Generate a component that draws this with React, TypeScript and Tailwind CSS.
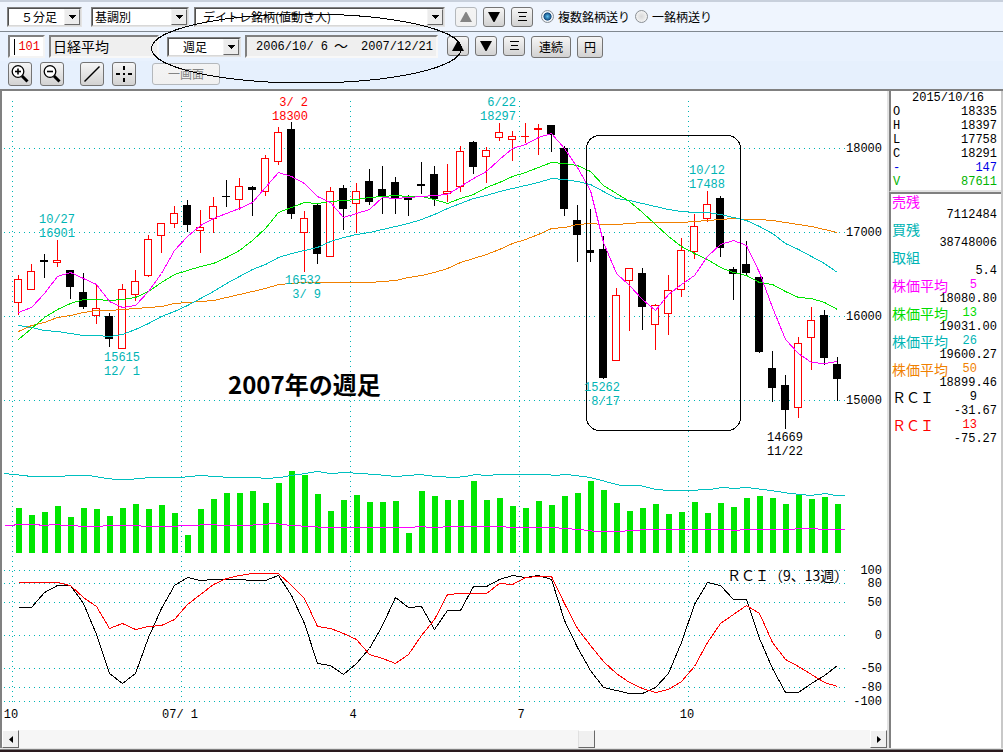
import React, { useState } from 'react';
import clsx from 'clsx';

interface Candle {
  high: number;
  top: number;
  bottom: number;
  low: number;
  up: boolean;
}

type Row = [number, number, number, number, number];

// high, body top, body bottom, low, 1 = up week
const candleRows: Row[] = [
  [275, 279, 303, 315, 1], [264, 271, 290, 290, 1], [254, 260, 262, 278, 0], [240, 260, 263, 267, 1],
  [270, 270, 287, 299, 0], [273, 292, 307, 309, 0], [285, 308, 316, 324, 1], [313, 316, 339, 347, 0],
  [284, 289, 349, 349, 1], [270, 281, 295, 301, 1], [235, 239, 276, 277, 1], [223, 223, 236, 253, 1],
  [206, 213, 224, 228, 1], [200, 205, 225, 232, 0], [210, 227, 231, 253, 1], [197, 206, 219, 233, 1],
  [180, 196, 197, 207, 0], [178, 186, 200, 210, 1], [186, 187, 190, 216, 0], [155, 158, 192, 196, 1],
  [127, 132, 162, 165, 1], [122, 129, 214, 219, 0], [211, 218, 233, 272, 1], [204, 205, 254, 264, 0],
  [187, 191, 257, 257, 1], [185, 188, 209, 230, 0], [183, 191, 204, 233, 1], [169, 181, 202, 205, 0],
  [166, 189, 196, 214, 0], [177, 182, 199, 214, 0], [195, 197, 200, 216, 0], [162, 184, 186, 194, 0],
  [166, 174, 199, 206, 0], [164, 191, 194, 202, 1], [146, 151, 187, 192, 1], [141, 142, 167, 174, 0],
  [147, 150, 157, 183, 1], [123, 132, 138, 141, 1], [131, 136, 140, 161, 1], [123, 136, 137, 143, 1],
  [124, 128, 130, 155, 1], [125, 125, 135, 152, 0], [146, 148, 209, 216, 0], [205, 220, 235, 262, 0],
  [209, 250, 253, 262, 0], [236, 249, 378, 379, 0], [288, 295, 361, 361, 1], [268, 268, 281, 331, 1],
  [268, 273, 307, 330, 0], [304, 305, 325, 350, 1], [275, 290, 314, 335, 1], [238, 250, 290, 297, 1],
  [214, 226, 252, 259, 1], [191, 204, 219, 222, 1], [196, 198, 248, 257, 0], [267, 269, 274, 300, 0],
  [241, 264, 273, 276, 0], [277, 277, 352, 353, 0], [351, 368, 388, 402, 0], [375, 385, 410, 429, 0],
  [337, 343, 408, 418, 1], [307, 320, 338, 370, 1], [310, 315, 358, 365, 0], [357, 364, 379, 401, 0],
];

const candles: Candle[] = candleRows.map(([high, top, bottom, low, up]) => ({ high, top, bottom, low, up: up === 1 }));

const ma5 = [
  312, 307, 293, 276, 272, 278, 284, 301, 307, 305, 291, 273, 250, 236, 225, 218, 213, 208, 202, 187, 172, 176,
  183, 196, 202, 217, 213, 209, 197, 198, 197, 196, 195, 194, 186, 178, 171, 159, 148, 144, 137, 133, 148, 167,
  190, 242, 273, 285, 299, 310, 294, 284, 275, 256, 244, 240, 245, 272, 307, 339, 353, 362, 363, 361,
];
const ma13 = [
  339, 328, 317, 309, 303, 299, 299, 300, 299, 297, 291, 282, 274, 270, 266, 263, 257, 250, 240, 228, 212, 207,
  202, 203, 201, 200, 199, 197, 196, 195, 196, 196, 199, 203, 198, 194, 187, 182, 176, 172, 167, 162, 163, 165,
  171, 185, 193, 201, 212, 224, 236, 246, 253, 259, 267, 272, 275, 282, 284, 291, 297, 298, 302, 309,
];
const ma26 = [
  325, 327, 330, 331, 333, 335, 335, 336, 334, 329, 323, 316, 311, 305, 298, 291, 283, 276, 269, 264, 257, 253,
  250, 247, 241, 237, 234, 232, 229, 226, 223, 219, 214, 208, 203, 198, 195, 191, 188, 185, 182, 178, 179, 181,
  184, 191, 198, 200, 203, 206, 209, 211, 212, 212, 214, 217, 220, 226, 233, 243, 249, 256, 263, 272,
];
const ma50 = [
  331, 325, 322, 317, 315, 312, 310, 310, 309, 308, 307, 306, 303, 302, 301, 300, 297, 294, 291, 288, 284, 283,
  282, 282, 282, 282, 282, 282, 281, 280, 277, 275, 272, 268, 262, 258, 254, 249, 243, 239, 234, 228, 227, 224,
  223, 224, 224, 223, 222, 222, 222, 222, 221, 220, 219, 218, 219, 219, 220, 222, 224, 226, 229, 232,
];
const volumes = [
  508, 515, 512, 506, 517, 508, 509, 516, 508, 504, 509, 505, 513, 535, 509, 499, 493, 493, 491, 503, 483, 471,
  475, 494, 511, 500, 495, 502, 502, 501, 533, 491, 496, 500, 500, 481, 500, 498, 506, 508, 501, 505, 496, 493,
  481, 490, 503, 511, 508, 504, 514, 512, 502, 513, 503, 507, 498, 496, 498, 504, 495, 499, 497, 504,
];
const rci9 = [
  607, 607, 592, 585, 585, 603, 634, 673, 683, 673, 637, 608, 585, 577, 580, 579, 579, 579, 580, 580, 575, 595,
  623, 663, 665, 674, 663, 648, 625, 597, 607, 606, 629, 610, 610, 586, 586, 579, 575, 577, 575, 579, 620, 647,
  670, 687, 690, 693, 693, 687, 673, 642, 604, 582, 585, 599, 599, 638, 668, 692, 692, 683, 675, 665,
];
const rci13 = [
  582, 582, 582, 582, 585, 597, 606, 628, 623, 629, 626, 625, 619, 604, 594, 584, 578, 575, 573, 573, 573, 585,
  598, 626, 628, 633, 639, 654, 658, 663, 654, 635, 619, 594, 593, 593, 593, 583, 584, 577, 576, 576, 603, 628,
  645, 661, 673, 682, 688, 692, 689, 681, 666, 642, 623, 614, 605, 613, 642, 659, 666, 674, 682, 686,
];

const buyLine =
  '4,473 12,474 24,475 30,476 60,476 70,475 88,475 100,477 115,479 128,479 150,477 180,477 200,475 230,477 255,477 265,478 280,477 290,475 305,473 317,471 330,473 345,472 375,474 395,476 420,474 435,476 455,477 465,476 475,474 485,475 500,474 545,474 555,475 565,474 575,475 590,477 605,481 620,485 640,485 655,489 670,490 685,490 710,489 722,487 735,488 745,487 755,488 770,490 790,493 810,495 825,493 835,495 844,495';
const sellLine =
  '4,525 12,525 16,524 36,524 42,525 55,524 64,525 90,526 116,525 165,526 190,525 210,524 222,525 245,525 275,523 290,525 310,526 325,527 410,527 420,526 430,527 455,526 500,526 510,527 555,527 562,528 580,529 595,531 620,531 630,530 650,529 725,529 735,530 745,529 790,529 800,528 815,528 820,529 844,529';

const priceLabels = [
  { x: 57, y: 223, lines: ['10/27', '16901'], color: 'fill-[#00b4b4]' },
  { x: 122, y: 361, lines: ['15615', '12/ 1'], color: 'fill-[#00b4b4]' },
  { x: 291, y: 106, lines: ['3/ 2', '18300'], color: 'fill-[#ff0000]', anchor: 'end' },
  { x: 304, y: 284, lines: ['16532', '3/ 9'], color: 'fill-[#00b4b4]', anchor: 'end' },
  { x: 499, y: 106, lines: ['6/22', '18297'], color: 'fill-[#00b4b4]', anchor: 'end' },
  { x: 603, y: 391, lines: ['15262', '8/17'], color: 'fill-[#00b4b4]', anchor: 'end' },
  { x: 707, y: 174, lines: ['10/12', '17488'], color: 'fill-[#00b4b4]' },
  { x: 785, y: 441, lines: ['14669', '11/22'], color: 'fill-black' },
];

const priceAxis = [
  { label: '18000', y: 148 },
  { label: '17000', y: 232 },
  { label: '16000', y: 316 },
  { label: '15000', y: 400 },
];

const rciAxis = [
  { label: '100', y: 570 },
  { label: '80', y: 583 },
  { label: '50', y: 602 },
  { label: '0', y: 635 },
  { label: '-50', y: 668 },
  { label: '-80', y: 687 },
  { label: '-100', y: 701 },
];

const timeAxis = [
  { label: '10', x: 12, textX: 11 },
  { label: '07/ 1', x: 181, textX: 180 },
  { label: '4', x: 350, textX: 353 },
  { label: '7', x: 519, textX: 521 },
  { label: '10', x: 688, textX: 687 },
];

const quote = [
  { label: 'O', value: '18335', color: 'text-black' },
  { label: 'H', value: '18397', color: 'text-black' },
  { label: 'L', value: '17758', color: 'text-black' },
  { label: 'C', value: '18291', color: 'text-black' },
  { label: '-', value: '147', color: 'text-[#0000e6]' },
  { label: 'V', value: '87611', color: 'text-[#00b400]' },
];

const indicators = [
  { label: '売残', period: '', value: '7112484', color: 'text-[#ff00ff]' },
  { label: '買残', period: '', value: '38748006', color: 'text-[#00b4b4]' },
  { label: '取組', period: '', value: '5.4', color: 'text-[#00b4b4]' },
  { label: '株価平均', period: '5', value: '18080.80', color: 'text-[#ff00ff]' },
  { label: '株価平均', period: '13', value: '19031.00', color: 'text-[#00dc00]' },
  { label: '株価平均', period: '26', value: '19600.27', color: 'text-[#00b4b4]' },
  { label: '株価平均', period: '50', value: '18899.46', color: 'text-[#f08000]' },
  { label: 'ＲＣＩ', period: '9', value: '-31.67', color: 'text-black' },
  { label: 'ＲＣＩ', period: '13', value: '-75.27', color: 'text-[#ff0000]' },
];

const candleX = (i: number) => 18 + i * 13;
const toPoints = (ys: number[]) => ys.map((y, i) => `${candleX(i)},${y}`).join(' ');

function Combo({ label, options, className, textClass }: { label: string; options: string[]; className: string; textClass: string }) {
  return (
    <div className={clsx('relative shrink-0 border border-[#e4e4e4] border-t-[#808080] border-l-[#808080] bg-white', className)}>
      <select
        aria-label={label}
        className={clsx('block h-[18px] w-full appearance-none border border-[#d8d8d8] border-t-[#505050] border-l-[#505050] bg-white pr-4 text-xs leading-4 text-black outline-none', textClass)}
      >
        {options.map((option) => (
          <option key={option}>{option}</option>
        ))}
      </select>
      <span className="pointer-events-none absolute top-px right-px flex h-4 w-4 items-center justify-center border border-[#696969] border-t-[#f4f4f4] border-l-[#f4f4f4] bg-[#ececec]">
        <svg width="7" height="4" viewBox="0 0 7 4" shapeRendering="crispEdges">
          <path d="M0 0h7v1H0zM1 1h5v1H1zM2 2h3v1H2zM3 3h1v1H3z" />
        </svg>
      </span>
    </div>
  );
}

function ToolButton({ label, className, disabled, children }: { label: string; className: string; disabled?: boolean; children: React.ReactNode }) {
  return (
    <button
      type="button"
      aria-label={label}
      disabled={disabled}
      className={clsx(
        'flex shrink-0 items-center justify-center rounded-[3px] border bg-gradient-to-b text-xs leading-4',
        disabled
          ? 'border-[#b4b8bc] from-[#f4f4f4] to-[#f0f0f0] text-[#848484]'
          : 'border-[#747474] from-[#f6f6f6] to-[#d2d2d2] text-black',
        className
      )}
    >
      {children}
    </button>
  );
}

function Triangle({ down }: { down?: boolean }) {
  return (
    <svg width="12" height="10" viewBox="0 0 12 10" fill="currentColor">
      {down ? <path d="M0 0h12L6.5 10h-1z" /> : <path d="M5.5 0h1L12 10H0z" />}
    </svg>
  );
}

function Bars() {
  return (
    <svg width="9" height="9" viewBox="0 0 9 9" fill="currentColor" shapeRendering="crispEdges">
      <path d="M0 0h9v1H0zM1 4h7v1H1zM0 8h9v1H0z" />
    </svg>
  );
}

function Magnifier({ plus }: { plus?: boolean }) {
  return (
    <svg width="22" height="22" viewBox="0 0 22 22" fill="none" stroke="#000">
      <circle cx="9" cy="8.5" r="5.8" strokeWidth="1.3" fill="#fff" />
      <path d="M6 8.5h6" strokeWidth="1.6" />
      {plus && <path d="M9 5.5v6" strokeWidth="1.6" />}
      <path d="M13 13l5.5 5.5" strokeWidth="3" />
    </svg>
  );
}

function SendMode() {
  const [mode, setMode] = useState('multi');
  const options = [
    { id: 'multi', label: '複数銘柄送り' },
    { id: 'single', label: '一銘柄送り' },
  ];
  return (
    <div className="ml-2 flex items-center gap-[5px]">
      {options.map((option) => (
        <label key={option.id} className="flex items-center gap-1 text-xs leading-4 whitespace-nowrap">
          <input
            type="radio"
            name="send-mode"
            checked={mode === option.id}
            onChange={() => setMode(option.id)}
            className="h-[13px] w-[13px] appearance-none rounded-full border border-[#8a8f94] bg-[radial-gradient(circle,#d8d8d8_0%,#f6f6f6_80%)] checked:bg-[radial-gradient(circle,#5cc0f0_0%,#12487c_48%,#f0f4f8_56%)]"
          />
          {option.label}
        </label>
      ))}
    </div>
  );
}

function Toolbar() {
  return (
    <header className="relative border-t-2 border-[#c8d0dc]">
      {/* Watch list row */}
      <div className="flex h-[30px] items-center border-b border-[#808890] bg-[#eff5fe] pl-[7px]">
        <Combo label="足種" options={['５分足']} className="w-[75px]" textClass="pl-3" />
        <Combo label="分類" options={['基調別']} className="ml-[9px] w-[98px]" textClass="pl-[2px]" />
        <Combo label="銘柄リスト" options={['デイトレ銘柄(値動き人)']} className="ml-[5px] w-[251px]" textClass="pl-[7px]" />
        <div className="ml-[10px] flex gap-1.5">
          <ToolButton label="前の銘柄" className="h-5 w-[22px]" disabled><Triangle /></ToolButton>
          <ToolButton label="次の銘柄" className="h-5 w-[22px]"><Triangle down /></ToolButton>
          <ToolButton label="銘柄一覧" className="h-5 w-[22px]"><Bars /></ToolButton>
        </div>
        <SendMode />
      </div>

      {/* Symbol and period row */}
      <div className="flex h-[29px] items-center bg-[#e9f2fe] pl-2">
        <div className="relative shrink-0">
          <input
            aria-label="銘柄コード"
            defaultValue="101"
            className="block h-[23px] w-[37px] border-2 border-[#f4f4f4] border-t-[#808080] border-l-[#808080] bg-white pr-[3px] text-right font-['Liberation_Mono',monospace] text-xs text-[#f00000] outline-none"
          />
          <span className="pointer-events-none absolute top-1 left-1.5 h-4 w-px bg-black" />
        </div>
        <input
          aria-label="銘柄名"
          readOnly
          value="日経平均"
          className="ml-1 h-[23px] w-[110px] shrink-0 border-2 border-[#f8f8f8] border-t-[#808080] border-l-[#808080] bg-[#efefef] pb-0.5 pl-[2px] text-sm text-black outline-none"
        />
        <Combo label="期間" options={['週足']} className="ml-2 w-[74px]" textClass="pl-[14px]" />
        <output className="ml-1 flex h-[23px] w-[193px] shrink-0 items-center border-2 border-[#f8f8f8] border-t-[#808080] border-l-[#808080] bg-[#efefef] pl-[9px] font-['Liberation_Mono','Noto_Sans_CJK_JP',monospace] text-xs leading-4 whitespace-pre">
          <span className="w-[78px]">2006/10/ 6</span>
          <span className="w-[27px] text-sm">～</span>
          <span>2007/12/21</span>
        </output>
        <div className="ml-[9px] flex gap-1.5">
          <ToolButton label="前へ" className="h-5 w-[22px]"><Triangle /></ToolButton>
          <ToolButton label="次へ" className="h-5 w-[22px]"><Triangle down /></ToolButton>
          <ToolButton label="一覧" className="h-5 w-[22px]"><Bars /></ToolButton>
          <ToolButton label="連続" className="h-[22px] w-10">連続</ToolButton>
          <ToolButton label="円" className="h-[22px] w-[26px]">円</ToolButton>
        </div>
      </div>

      {/* Drawing tools row */}
      <div className="flex h-7 items-center bg-[#e6f0fd] pb-0.5 pl-2">
        <ToolButton label="拡大" className="h-6 w-6"><Magnifier plus /></ToolButton>
        <ToolButton label="縮小" className="ml-2 h-6 w-6"><Magnifier /></ToolButton>
        <ToolButton label="ライン" className="ml-4 h-6 w-6">
          <svg width="22" height="22" viewBox="0 0 22 22"><path d="M3.5 18.5l15-15" stroke="#000" strokeWidth="1.4" /></svg>
        </ToolButton>
        <ToolButton label="十字線" className="ml-2 h-6 w-6">
          <svg width="22" height="22" viewBox="0 0 22 22" shapeRendering="crispEdges">
            <path d="M3 10h4v2H3zM10 10h2v2h-2zM15 10h4v2h-4zM10 3h2v4h-2zM10 15h2v4h-2z" />
          </svg>
        </ToolButton>
        <ToolButton label="一画面" className="ml-4 h-[22px] w-[68px]" disabled>一画面</ToolButton>
      </div>

      {/* Hand drawn circle over the period */}
      <svg className="pointer-events-none absolute -top-0.5 left-0" width="470" height="90" fill="none" shapeRendering="crispEdges">
        <ellipse cx="306.5" cy="48.5" rx="155" ry="34.5" stroke="#000" />
      </svg>
    </header>
  );
}

function Chart() {
  return (
    <svg viewBox="2 91 885 639" className="block h-auto w-full bg-white" role="img" aria-label="日経平均 週足">
      {/* Dotted grid */}
      <g className="stroke-[#00b4b4]" strokeDasharray="1 4" shapeRendering="crispEdges">
        {[...priceAxis, ...rciAxis].map((tick) => (
          <path key={tick.label} d={`M4 ${tick.y + 0.5}H845`} />
        ))}
        {timeAxis.map((tick) => (
          <path key={tick.x} d={`M${tick.x + 0.5} 101V702`} />
        ))}
      </g>

      {/* Volume */}
      <g shapeRendering="crispEdges">
        {volumes.map((y, i) => (
          <rect key={i} x={candleX(i) - 2} y={y} width="6" height={553 - y} className="fill-[#00e600]" />
        ))}
      </g>

      {/* Candles */}
      <g shapeRendering="crispEdges">
        {candles.map((c, i) => {
          const x = candleX(i);
          const height = c.bottom - c.top;
          return (
            <g key={i}>
              <rect x={x} y={c.high} width="1" height={c.low - c.high} className={c.up ? 'fill-[#ff0000]' : 'fill-black'} />
              <rect x={x - 4} y={c.top} width="8" height={height} className={c.up ? 'fill-[#ff0000]' : 'fill-black'} />
              {c.up && height > 2 && <rect x={x - 3} y={c.top + 1} width="6" height={height - 2} className="fill-white" />}
            </g>
          );
        })}
      </g>

      {/* Moving averages, margin balances and RCI */}
      <g fill="none" transform="translate(0.5 0.5)" shapeRendering="crispEdges">
        <polyline points={toPoints(ma50)} className="stroke-[#f08000]" />
        <polyline points={toPoints(ma26)} className="stroke-[#00c0c0]" />
        <polyline points={toPoints(ma13)} className="stroke-[#00e600]" />
        <polyline points={toPoints(ma5)} className="stroke-[#ff00ff]" />
        <polyline points={buyLine} className="stroke-[#00c0c0]" />
        <polyline points={sellLine} className="stroke-[#ff00ff]" />
        <polyline points={toPoints(rci9)} className="stroke-black" />
        <polyline points={toPoints(rci13)} className="stroke-[#ff0000]" />
        <rect x="586" y="135" width="154" height="295" rx="13" className="stroke-black" />
      </g>

      {/* Labels */}
      <g className="font-['Liberation_Mono',monospace] text-xs whitespace-pre">
        {priceLabels.map((item) => (
          <g key={item.x} className={item.color} textAnchor={item.anchor === 'end' ? 'end' : 'middle'}>
            <text x={item.anchor === 'end' ? item.x + 17 : item.x} y={item.y}>{item.lines[0]}</text>
            <text x={item.anchor === 'end' ? item.x + 17 : item.x} y={item.y + 14}>{item.lines[1]}</text>
          </g>
        ))}
        {[...priceAxis, ...rciAxis].map((tick) => (
          <text key={tick.label} x="882" y={tick.y + 4} textAnchor="end">{tick.label}</text>
        ))}
        {timeAxis.map((tick) => (
          <text key={tick.x} x={tick.textX} y="718" textAnchor="middle">{tick.label}</text>
        ))}
      </g>
      <text x="727" y="581" className="text-sm">ＲＣＩ（9、13週）</text>
      <text x="228" y="394" className="text-2xl font-bold">2007年の週足</text>
    </svg>
  );
}

function ScrollBar() {
  const [position, setPosition] = useState(67);
  const stepClass =
    'flex w-[17px] shrink-0 items-center justify-center border border-[#696969] border-t-white border-l-white bg-[#f0f0f0]';
  return (
    <div className="flex h-[18px] bg-[#f6f6f6]">
      <button type="button" aria-label="左へ" className={stepClass} onClick={() => setPosition(Math.max(0, position - 1))}>
        <svg width="4" height="7" viewBox="0 0 4 7"><path d="M4 0v7L0 3.5z" /></svg>
      </button>
      <input
        type="range"
        aria-label="表示位置"
        value={position}
        onChange={(e) => setPosition(Number(e.target.value))}
        className="h-[18px] min-w-0 flex-1 appearance-none bg-transparent [&::-webkit-slider-thumb]:h-[18px] [&::-webkit-slider-thumb]:w-[17px] [&::-webkit-slider-thumb]:appearance-none [&::-webkit-slider-thumb]:border [&::-webkit-slider-thumb]:border-[#696969] [&::-webkit-slider-thumb]:border-t-white [&::-webkit-slider-thumb]:border-l-[#e0e0e0] [&::-webkit-slider-thumb]:bg-[#f0f0f0]"
      />
      <button type="button" aria-label="右へ" className={stepClass} onClick={() => setPosition(Math.min(100, position + 1))}>
        <svg width="4" height="7" viewBox="0 0 4 7"><path d="M0 0v7l4-3.5z" /></svg>
      </button>
    </div>
  );
}

function Sidebar() {
  return (
    <aside className="flex w-[114px] shrink-0 flex-col border-r-2 border-[#c8c8c8] bg-[#e8e8e8] font-['Liberation_Mono',monospace] text-xs leading-[14px]">
      <section className="border-b-2 border-l-2 border-b-[#e3e3e3] border-l-[#808080] bg-white pr-1 pb-px pl-0.5">
        <p className="pl-1.5 text-center">2015/10/16</p>
        {quote.map((row) => (
          <div key={row.label} className={clsx('flex justify-between', row.color)}>
            <span>{row.label}</span>
            <span>{row.value}</span>
          </div>
        ))}
      </section>
      <section className="flex-1 border-t-2 border-l-2 border-[#808080] bg-white pr-1 pl-px">
        {indicators.map((row) => (
          <div key={row.label + row.period}>
            <div className={clsx('flex justify-between pr-5', row.color)}>
              <span className="font-['Noto_Sans_CJK_JP',sans-serif] text-sm leading-[14px]">{row.label}</span>
              <span>{row.period}</span>
            </div>
            <div className="text-right">{row.value}</div>
          </div>
        ))}
      </section>
    </aside>
  );
}

export default function App() {
  return (
    <div className="bg-white font-['Noto_Sans_CJK_JP',sans-serif] text-black">
      <Toolbar />
      <main className="flex border-t-2 border-b border-t-[#808080] border-b-[#e3e3e3]">
        <div className="min-w-0 flex-1 border-r-2 border-l-2 border-r-[#e3e3e3] border-l-[#808080]">
          <Chart />
          <ScrollBar />
        </div>
        <Sidebar />
      </main>
      <div className="h-[3px] border-t border-[#808080] bg-[#2a1a1e]" />
    </div>
  );
}
